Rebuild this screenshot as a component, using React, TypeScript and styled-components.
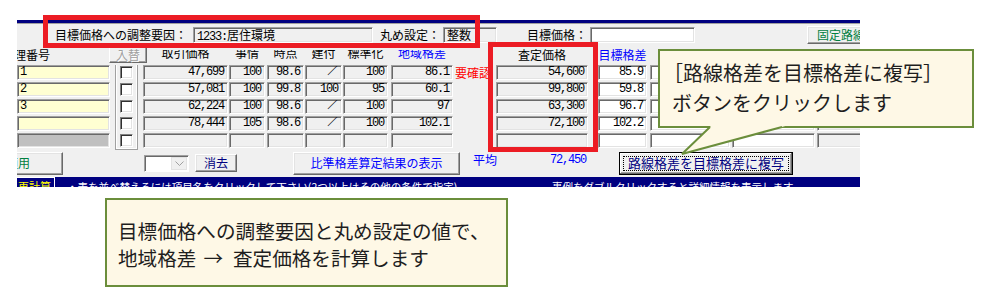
import styled, { css, createGlobalStyle } from "styled-components";

const UI = `"Noto Sans CJK JP", "Noto Sans", sans-serif`;
const MONO = `"Liberation Mono", "Noto Sans CJK JP", monospace`;

const GlobalStyle = createGlobalStyle`
  html, body { margin: 0; padding: 0; background: #ffffff; }
  body { font-family: ${UI}; }
  * { box-sizing: border-box; }
`;

// grid tracks of the comparison table (gaps are their own tracks)
const TRACKS =
  "93px 5px 23px 5px 85px 1px 36px 2px 37px 1px 37px 1px 45px 3px 62px 43px 92px 10px 49px 3px 80px 2px 83px 2px 60px";

const COL = {
  num: 1,
  chk: 3,
  trade: 5,
  jijo: 7,
  jiten: 9,
  tate: 11,
  std: 13,
  area: 15,
  note: 16,
  assess: 17,
  target: 19,
  c1: 21,
  c2: 23,
  c3: 25,
};

type Tone = "gray" | "white" | "yellow" | "dim";

const toneBg: Record<Tone, string> = {
  gray: "#f0f0f0",
  white: "#ffffff",
  yellow: "#ffffd2",
  dim: "#c0c0c0",
};

// labels with clip: the old form draws them in a control that is too short
const headers = [
  { col: COL.trade, text: "取引価格", clip: true },
  { col: COL.jijo, text: "事情", clip: true },
  { col: COL.jiten, text: "時点", clip: true },
  { col: COL.tate, text: "建付", clip: true },
  { col: COL.std, text: "標準化", clip: true },
  { col: COL.area, text: "地域格差", color: "#0000ff", clip: true },
  { col: COL.assess, text: "査定価格" },
  { col: COL.target, text: "目標格差", color: "#0000ff" },
  { col: COL.c1, text: "目標価格差" },
  { col: COL.c2, text: "路線価格" },
  { col: COL.c3, text: "路線格差" },
];

const valueCols: { key: string; col: number; tone: Tone }[] = [
  { key: "trade", col: COL.trade, tone: "gray" },
  { key: "jijo", col: COL.jijo, tone: "gray" },
  { key: "jiten", col: COL.jiten, tone: "gray" },
  { key: "tate", col: COL.tate, tone: "gray" },
  { key: "std", col: COL.std, tone: "gray" },
  { key: "area", col: COL.area, tone: "gray" },
  { key: "assess", col: COL.assess, tone: "gray" },
  { key: "target", col: COL.target, tone: "white" },
  { key: "c1", col: COL.c1, tone: "white" },
  { key: "c2", col: COL.c2, tone: "white" },
  { key: "c3", col: COL.c3, tone: "gray" },
];

const rows: Record<string, string>[] = [
  { no: "1", trade: "47,699", jijo: "100", jiten: "98.6", tate: "／", std: "100", area: "86.1", note: "要確認", assess: "54,600", target: "85.9" },
  { no: "2", trade: "57,081", jijo: "100", jiten: "99.8", tate: "100", std: "95", area: "60.1", assess: "99,800", target: "59.8" },
  { no: "3", trade: "62,224", jijo: "100", jiten: "98.6", tate: "／", std: "100", area: "97", assess: "63,300", target: "96.7" },
  { no: "", trade: "78,444", jijo: "105", jiten: "98.6", tate: "／", std: "100", area: "102.1", assess: "72,100", target: "102.2" },
  { no: "" },
];

const Page = styled.div`
  position: relative;
  width: 981px;
  height: 299px;
  overflow: hidden;
  padding-top: 20px;
  display: flex;
  flex-direction: column;
`;

const Frame = styled.div`
  margin-left: 17px;
  width: 843px;
  height: 167px;
  overflow: hidden;
  background: #f0f0f0;
  display: flex;
  flex-direction: column;
  font: 12px/16px ${UI};
  color: #000;
`;

const TitleBar = styled.div`
  height: 4px;
  background: #000080;
  border-bottom: 1px solid #a0a0a0;
  flex-shrink: 0;
`;

const InfoRow = styled.div`
  height: 22px;
  display: flex;
  align-items: center;
  flex-shrink: 0;
`;

const InfoLabel = styled.span<{ $ml: number }>`
  margin-left: ${(p) => p.$ml}px;
  white-space: nowrap;
`;

const Field = styled.div<{ $ml: number; $w: number; $white?: boolean }>`
  margin-left: ${(p) => p.$ml}px;
  width: ${(p) => p.$w}px;
  height: 16px;
  flex-shrink: 0;
  padding-left: 3px;
  background: ${(p) => (p.$white ? "#ffffff" : "#f0f0f0")};
  border: 1px solid;
  border-color: #a0a0a0 #ffffff #ffffff #a0a0a0;
  box-shadow: inset 1px 1px 0 #696969, inset -1px -1px 0 #e3e3e3;
  font: 12px/14px ${UI};
  white-space: nowrap;
  overflow: hidden;
`;

const Num = styled.span`
  font-family: ${MONO};
  letter-spacing: -1.2px;
`;

const WinButton = styled.button<{ $ml: number; $w: number; $h: number; $color?: string }>`
  margin-left: ${(p) => p.$ml}px;
  width: ${(p) => p.$w}px;
  height: ${(p) => p.$h}px;
  flex-shrink: 0;
  padding: 0;
  background: #f0f0f0;
  border: 1px solid;
  border-color: #ffffff #696969 #696969 #ffffff;
  box-shadow: inset -1px -1px 0 #a0a0a0, inset 1px 1px 0 #e3e3e3;
  font: 12px/14px ${UI};
  color: ${(p) => p.$color ?? "#000"};
  white-space: nowrap;
  overflow: hidden;
`;

const DefaultButton = styled(WinButton)`
  border: 1px solid #000;
  box-shadow: inset -1px -1px 0 #696969, inset 1px 1px 0 #ffffff, inset -2px -2px 0 #a0a0a0;
  padding: 3px;
`;

const FocusRing = styled.span`
  display: flex;
  align-items: center;
  justify-content: center;
  height: 100%;
  border: 1px dotted #000;
  font-size: 13px;
`;

const Table = styled.div`
  display: grid;
  grid-template-columns: ${TRACKS};
  grid-template-rows: 17px repeat(5, 15px);
  row-gap: 2px;
  flex-shrink: 0;
`;

const HeadLabel = styled.div<{ $col: number; $color?: string; $clip?: boolean }>`
  grid-row: 1;
  grid-column: ${(p) => p.$col};
  align-self: center;
  text-align: center;
  font: 12px/17px ${UI};
  color: ${(p) => p.$color ?? "#000"};
  white-space: nowrap;
  ${(p) =>
    p.$clip &&
    css`
      align-self: end;
      height: 13px;
      line-height: 5px;
      overflow: hidden;
    `}
`;

const NumHead = styled(HeadLabel)`
  text-align: left;
  margin-left: -3px;
`;

const SwapButton = styled.div`
  grid-row: 1;
  grid-column: 2 / 5;
  width: 38px;
  margin-left: -1px;
  height: 17px;
  background: #f0f0f0;
  border: 1px solid;
  border-color: #ffffff #696969 #696969 #ffffff;
  box-shadow: inset -1px -1px 0 #a0a0a0;
  text-align: center;
  font: 12px/15px ${UI};
  color: #a0a0a0;
  text-shadow: 1px 1px 0 #ffffff;
`;

const Cell = styled.div<{ $col: number; $row: number; $tone: Tone }>`
  grid-column: ${(p) => p.$col};
  grid-row: ${(p) => p.$row};
  border: 1px solid;
  border-color: #a0a0a0 #ffffff #ffffff #a0a0a0;
  box-shadow: inset 1px 1px 0 #696969, inset -1px -1px 0 #e3e3e3;
  background: ${(p) => toneBg[p.$tone]};
  padding: 0 3px;
  font: 12px/13px ${MONO};
  letter-spacing: -1.2px;
  text-align: right;
  white-space: nowrap;
  overflow: hidden;
`;

const NoCell = styled(Cell)`
  text-align: left;
  padding-left: 2px;
`;

const Warning = styled.div<{ $row: number }>`
  grid-column: ${COL.note};
  grid-row: ${(p) => p.$row};
  padding-left: 2px;
  font: 12px/15px ${UI};
  color: #ff0000;
  white-space: nowrap;
`;

const CheckStrip = styled.div`
  grid-column: ${COL.chk};
  grid-row: 2 / 7;
  margin-bottom: -2px;
  border: 1px solid #a0a0a0;
  border-top: none;
  box-shadow: inset 1px 0 0 #ffffff, inset -1px 0 0 #ffffff, inset 0 -1px 0 #ffffff;
  display: grid;
  grid-template-rows: repeat(5, 15px);
  row-gap: 2px;
  justify-items: center;
  align-items: center;
`;

const CheckBox = styled.span`
  width: 13px;
  height: 13px;
  background: #fff;
  border: 1px solid;
  border-color: #808080 #ffffff #ffffff #808080;
  box-shadow: inset 1px 1px 0 #303030, inset -1px -1px 0 #e3e3e3;
`;

const ButtonRow = styled.div`
  margin-top: 3px;
  height: 24px;
  display: flex;
  align-items: center;
  flex-shrink: 0;
`;

const Combo = styled.div<{ $ml: number }>`
  margin-left: ${(p) => p.$ml}px;
  width: 45px;
  height: 17px;
  display: flex;
  justify-content: flex-end;
  background: #fff;
  border: 1px solid;
  border-color: #a0a0a0 #ffffff #ffffff #a0a0a0;
  box-shadow: inset 1px 1px 0 #696969;
  padding: 1px 1px 1px 0;
`;

const ComboArrow = styled.span`
  width: 16px;
  height: 100%;
  display: flex;
  align-items: center;
  justify-content: center;
  background: #f0f0f0;
  border: 1px solid #e3e3e3;
`;

const Figure = styled.span<{ $ml: number; $w: number; $mono?: boolean }>`
  align-self: flex-start;
  margin-top: 1px;
  margin-left: ${(p) => p.$ml}px;
  width: ${(p) => p.$w}px;
  flex-shrink: 0;
  color: #0000ff;
  font: 12px/16px ${(p) => (p.$mono ? MONO : UI)};
  letter-spacing: ${(p) => (p.$mono ? "-1.2px" : "0")};
  white-space: nowrap;
`;

const StatusBar = styled.div`
  margin-top: 2px;
  height: 20px;
  flex-shrink: 0;
  background: #000080;
  display: flex;
  color: #ffffff;
  font: 10.5px/19px ${UI};
  white-space: nowrap;
`;

const StatusKey = styled.span`
  width: 38px;
  height: 19px;
  border: 1px solid #ffffff;
  border-left: none;
  color: #ffff00;
  font-size: 11px;
  line-height: 17px;
  text-align: right;
  padding-right: 3px;
  overflow: hidden;
`;

const StatusText = styled.span<{ $ml: number; $w?: number }>`
  margin-left: ${(p) => p.$ml}px;
  width: ${(p) => (p.$w ? `${p.$w}px` : "auto")};
  flex-shrink: 0;
  overflow: hidden;
`;

const NoteBox = styled.div`
  margin: 11px 0 0 105px;
  width: 403px;
  height: 89px;
  background: #fef8e6;
  border: 2px solid #6b8e3b;
  padding: 17px 0 0 11px;
  font: 19.6px/27px ${UI};
  color: #1e1e1e;
  white-space: nowrap;
`;

const Arrow = styled.span`
  margin: 0 10px 0 7px;
`;

const Highlight = styled.div<{ $x: number; $y: number; $w: number; $h: number }>`
  position: absolute;
  left: ${(p) => p.$x}px;
  top: ${(p) => p.$y}px;
  width: ${(p) => p.$w}px;
  height: ${(p) => p.$h}px;
  border: 5px solid #ec1c24;
  pointer-events: none;
`;

const Callout = styled.div`
  position: absolute;
  left: 658px;
  top: 49px;
  width: 316px;
  height: 79px;
  background: #fef8e6;
  border: 2px solid #6b8e3b;
  padding-top: 7px;
  font: 20px/30px ${UI};
  color: #1e1e1e;
  white-space: nowrap;
`;

const CalloutLine = styled.div<{ $indent: number }>`
  padding-left: ${(p) => p.$indent}px;
`;

const Tail = styled.svg`
  position: absolute;
  left: -2px;
  top: -2px;
  overflow: visible;
`;

export default function App() {
  return (
    <>
      <GlobalStyle />
      <Page>
        <Frame>
          <TitleBar />
          <InfoRow>
            <InfoLabel $ml={38}>目標価格への調整要因：</InfoLabel>
            <Field $ml={6} $w={180}>
              <Num>1233:</Num>居住環境
            </Field>
            <InfoLabel $ml={7}>丸め設定：</InfoLabel>
            <Field $ml={3} $w={54}>整数</Field>
            <InfoLabel $ml={30}>目標価格：</InfoLabel>
            <Field $ml={3} $w={105} $white />
            <WinButton $ml={112} $w={80} $h={18} $color="#008040">
              固定路線価
            </WinButton>
          </InfoRow>

          <Table>
            <NumHead $col={COL.num}>理番号</NumHead>
            <SwapButton>入替</SwapButton>
            {headers.map((h) => (
              <HeadLabel key={h.text} $col={h.col} $color={h.color} $clip={h.clip}>
                {h.text}
              </HeadLabel>
            ))}
            {rows.map((r, i) => (
              <NoCell key={`no${i}`} $col={COL.num} $row={i + 2} $tone={i === 4 ? "dim" : "yellow"}>
                {r.no}
              </NoCell>
            ))}
            {rows.map((r, i) =>
              valueCols.map((c) => (
                <Cell key={`${c.key}${i}`} $col={c.col} $row={i + 2} $tone={c.tone}>
                  {r[c.key] ?? ""}
                </Cell>
              ))
            )}
            {rows.map((r, i) =>
              r.note ? (
                <Warning key={`w${i}`} $row={i + 2}>
                  {r.note}
                </Warning>
              ) : null
            )}
            <CheckStrip>
              {rows.map((_, i) => (
                <CheckBox key={i} />
              ))}
            </CheckStrip>
          </Table>

          <ButtonRow>
            <WinButton $ml={-44} $w={90} $h={23} $color="#008040">
              適用
            </WinButton>
            <Combo $ml={81}>
              <ComboArrow>
                <svg width="9" height="5" viewBox="0 0 9 5">
                  <polyline points="0.5,0.5 4.5,4.5 8.5,0.5" fill="none" stroke="#a0a0a0" strokeWidth="1" />
                </svg>
              </ComboArrow>
            </Combo>
            <WinButton $ml={6} $w={42} $h={18} $color="#000080">
              消去
            </WinButton>
            <WinButton $ml={56} $w={167} $h={23} $color="#0000ff">
              比準格差算定結果の表示
            </WinButton>
            <Figure $ml={13} $w={77}>
              平均
            </Figure>
            <Figure $ml={0} $w={69} $mono>
              72,450
            </Figure>
            <DefaultButton $ml={0} $w={174} $h={23} $color="#000080">
              <FocusRing>路線格差を目標格差に複写</FocusRing>
            </DefaultButton>
          </ButtonRow>

          <StatusBar>
            <StatusKey>再計算</StatusKey>
            <StatusText $ml={12} $w={485}>
              ・表を並べ替えるには項目名をクリックして下さい(2つ以上はその他の条件で指定)
            </StatusText>
            <StatusText $ml={0}>事例をダブルクリックすると詳細情報を表示します</StatusText>
          </StatusBar>
        </Frame>

        <NoteBox>
          目標価格への調整要因と丸め設定の値で、
          <br />
          地域格差<Arrow>→</Arrow>査定価格を計算します
        </NoteBox>

        <Highlight $x={43} $y={15} $w={437} $h={33} />
        <Highlight $x={488} $y={42} $w={110} $h={110} />

        <Callout>
          <CalloutLine $indent={3}>［路線格差を目標格差に複写］</CalloutLine>
          <CalloutLine $indent={12}>ボタンをクリックします</CalloutLine>
          <Tail width="316" height="110" viewBox="0 0 316 110">
            <polygon points="54,76 131,76 24,105" fill="#fef8e6" />
            <polyline points="52,78 24,105 124,78" fill="none" stroke="#6b8e3b" strokeWidth="2" />
          </Tail>
        </Callout>
      </Page>
    </>
  );
}
